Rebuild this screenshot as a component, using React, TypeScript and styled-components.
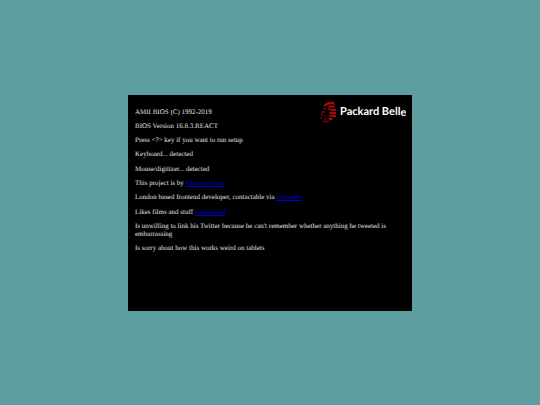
import React from "react";
import styled, { createGlobalStyle } from "styled-components";

const GlobalStyle = createGlobalStyle`
  body {
    margin: 0;
    background: #5f9ea0;
  }
`;

const Desktop = styled.main`
  display: flex;
  align-items: center;
  justify-content: center;
  min-height: 100vh;
`;

const Screen = styled.section`
  box-sizing: border-box;
  display: flex;
  align-items: flex-start;
  width: 284px;
  min-height: 216px;
  padding: 5px 6px 5px 7px;
  background: #000;
  color: #e0e0e0;
  font: 7px/8px "Liberation Serif", "Times New Roman", serif;
  text-rendering: geometricPrecision;
`;

const Messages = styled.div`
  display: flex;
  flex: 1;
  flex-direction: column;
  justify-content: space-between;
  min-width: 0;
  min-height: 145px;
  margin-top: 8px;
`;

const Line = styled.p`
  margin: 0;
  padding-right: 16px;
`;

const Link = styled.a`
  color: #0000cc;
`;

const Logo = styled.svg`
  flex: none;
  width: 86px;
  height: 24px;
  margin-left: -86px;
`;

const Wordmark = styled.text`
  fill: #fff;
  font: bold 11px Lato, "Open Sans", sans-serif;
`;

function PackardBelleLogo() {
  return (
    <Logo viewBox="0 0 86 24" role="img" aria-label="Packard Belle">
      <path
        d="M4 5C6 2 10 1 14 2L15 5L12 4L7 5L4 7ZM8 6L13 5L15 8L10 7L11 10H8L9 8ZM10 9H16V11H11ZM9 12H16V14H10ZM10 15H16V17H9ZM8 18L13 18L12 20H10Z"
        fill="#b00808"
      />
      <g fill="none" stroke="#7c0505" strokeWidth="1.4">
        <path d="M3 8L6 9M2 12L5 12M1 15L3 14M5 15L6 16" />
        <path d="M2 17L1 19M6 18L5 20M3 21L6 22L9 20" />
        <path d="M12 5V17" strokeWidth="1" />
      </g>
      <Wordmark x="20" y="15">
        Packard Bell<tspan dy="1">e</tspan>
      </Wordmark>
    </Logo>
  );
}

export default function App() {
  return (
    <>
      <GlobalStyle />
      <Desktop>
        <Screen>
          <Messages>
            <Line>AMII BIOS (C) 1992-2019</Line>
            <Line>BIOS Version 16.8.3.REACT</Line>
            <Line>Press &lt;?&gt; key if you want to run setup</Line>
            <Line>Keyboard... detected</Line>
            <Line>Mouse/digitizer... detected</Line>
            <Line>
              This project is by <Link href="#padraig">Padraig Flood</Link>
            </Line>
            <Line>
              London based frontend developer, contactable via{" "}
              <Link href="#linkedin">LinkedIn</Link>
            </Line>
            <Line>
              Likes films and stuff <Link href="#letterboxd">Letterboxd</Link>
            </Line>
            <Line>
              Is unwilling to link his Twitter because he can't remember whether
              anything he tweeted is embarrassing
            </Line>
            <Line>Is sorry about how this works weird on tablets</Line>
          </Messages>
          <PackardBelleLogo />
        </Screen>
      </Desktop>
    </>
  );
}
